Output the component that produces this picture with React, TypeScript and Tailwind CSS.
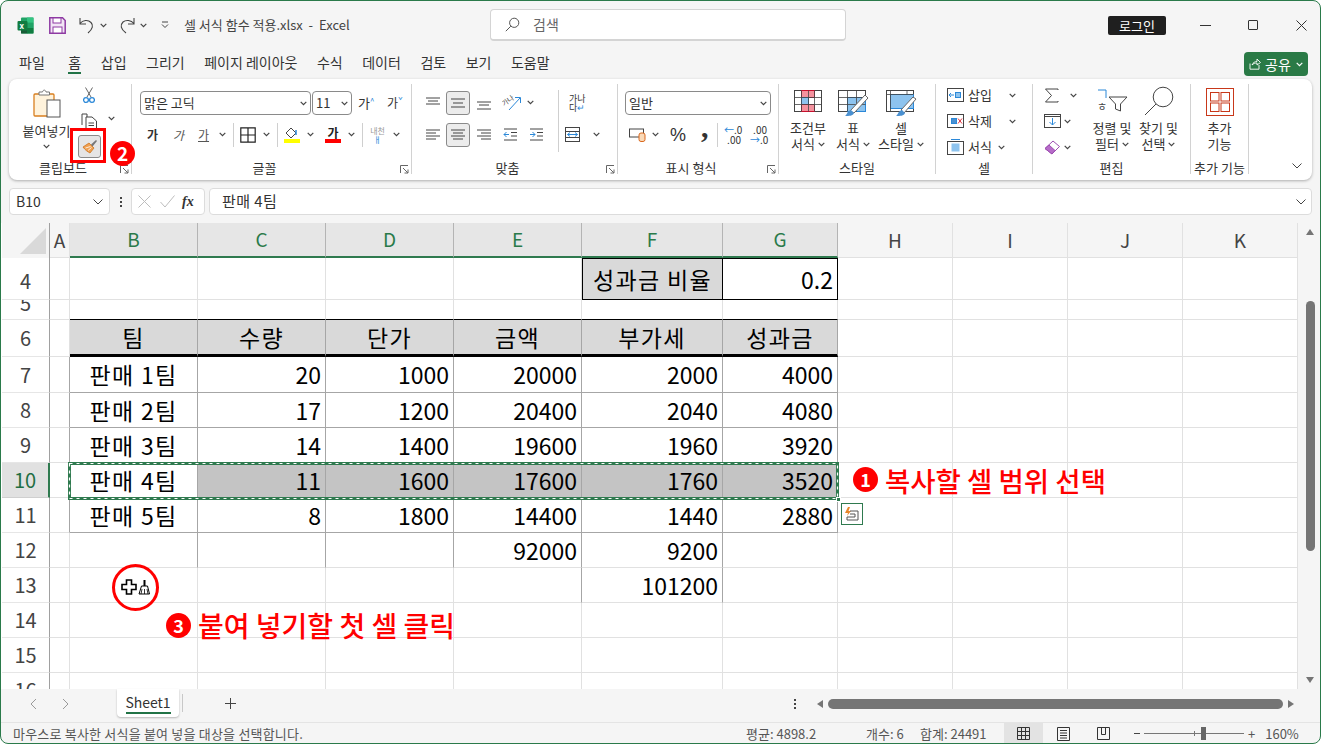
import type { ReactNode } from 'react'

const GRID = 'grid-cols-[48px_20px_128px_128px_128px_128px_141px_115px_115px_115px_115px_115px]'
const COLS = ['A', 'B', 'C', 'D', 'E', 'F', 'G', 'H', 'I', 'J', 'K']
const LIGHT = 'border-r border-b border-[#e1e1e1]'
const THIN = 'border-r border-b border-[#a6a6a6]'

const tableRows: Record<string, string[]> = {
  '7': ['판매 1팀', '20', '1000', '20000', '2000', '4000'],
  '8': ['판매 2팀', '17', '1200', '20400', '2040', '4080'],
  '9': ['판매 3팀', '14', '1400', '19600', '1960', '3920'],
  '10': ['판매 4팀', '11', '1600', '17600', '1760', '3520'],
  '11': ['판매 5팀', '8', '1800', '14400', '1440', '2880'],
  '12': ['', '', '', '92000', '9200', ''],
  '13': ['', '', '', '', '101200', ''],
}

const rows = [
  { n: '4', h: 'h-[42px]' },
  { n: '5', h: 'h-[20px]' },
  { n: '6', h: 'h-[37px]' },
  { n: '7', h: 'h-[36px]' },
  { n: '8', h: 'h-[35px]' },
  { n: '9', h: 'h-[35px]' },
  { n: '10', h: 'h-[35px]' },
  { n: '11', h: 'h-[35px]' },
  { n: '12', h: 'h-[35px]' },
  { n: '13', h: 'h-[35px]' },
  { n: '14', h: 'h-[35px]' },
  { n: '15', h: 'h-[35px]' },
  { n: '16', h: 'h-[35px]' },
]

function Chev({ className = '' }: { className?: string }) {
  return (
    <svg width="7" height="5" viewBox="0 0 7 5" className={`shrink-0 ${className}`}>
      <path d="M0.7 0.8 L3.5 3.6 L6.3 0.8" fill="none" stroke="#444" strokeWidth="1.2" />
    </svg>
  )
}

function Launcher() {
  return (
    <svg width="9" height="9" viewBox="0 0 9 9" className="shrink-0 ml-[3px] mr-[2px] mt-[3px]">
      <path d="M0.5 8 V0.5 H8 M3 3 L8 8 M8 4.5 V8 H4.5" fill="none" stroke="#666" strokeWidth="1" />
    </svg>
  )
}

function Group({ className, label, launcher, children }: { className: string; label: string; launcher?: boolean; children: ReactNode }) {
  return (
    <div className={`flex flex-col h-[90px] shrink-0 border-r border-[#d2d2d2] ${className}`}>
      <div className="h-[78px] flex">{children}</div>
      <div className="h-[12px] flex items-center text-[13px] leading-[12px] text-[#333]">
        <span className="flex-1 text-center whitespace-nowrap">{label}</span>
        {launcher && <Launcher />}
      </div>
    </div>
  )
}

function Lines({ ys, xs }: { ys: number[]; xs: [number, number][] }) {
  return (
    <svg width="16" height="16" viewBox="0 0 16 16">
      {ys.map((y, i) => (
        <path key={i} d={`M${xs[i][0]} ${y}H${xs[i][1]}`} stroke="#444" strokeWidth="1" />
      ))}
    </svg>
  )
}

function Sep({ className }: { className: string }) {
  return <div className={`w-px bg-[#cfcfcf] ${className}`} />
}

function Select({ className, text }: { className: string; text: string }) {
  return (
    <div className={`h-[24px] border border-[#8a8a8a] rounded-[4px] bg-white flex items-center justify-between pl-[3px] pr-[3px] text-[13px] text-[#333] ${className}`}>
      <span>{text}</span>
      <Chev />
    </div>
  )
}

function TableGridIcon({ children }: { children?: ReactNode }) {
  return (
    <svg width="32" height="28" viewBox="0 0 32 28" className="mt-[5px]">
      {children}
    </svg>
  )
}

function Cell({ row, col, text }: { row: string; col: number; text: string }) {
  let cls = LIGHT
  const inTable = col >= 1 && col <= 6
  const n = Number(row)
  if (row === '4' && col === 5) cls = 'border border-black bg-[#d9d9d9]'
  if (row === '4' && col === 6) cls = 'border-r border-y border-black'
  if (row === '5' && inTable) cls = 'border-r border-[#e1e1e1] border-b border-b-black'
  if (row === '6' && inTable) cls = 'bg-[#d9d9d9] border-r border-[#a6a6a6] border-b-[3px] border-b-black'
  if (n >= 7 && n <= 11 && inTable) cls = THIN
  if (n >= 7 && n <= 11 && col === 0) cls = 'border-r border-[#a6a6a6] border-b border-b-[#e1e1e1]'
  if (row === '10' && col >= 2 && col <= 6) cls = `${THIN} bg-[#c4c4c4]`
  if (row === '12' && col >= 1 && col <= 5) cls = 'border-r border-[#a6a6a6] border-b border-b-[#e1e1e1]'
  if (row === '13' && (col === 4 || col === 5)) cls = 'border-r border-[#a6a6a6] border-b border-b-[#e1e1e1]'
  const center = col === 1 || n === 6 || (row === '4' && col === 5)
  const hangul = /[가-힣]/.test(text)
  return (
    <div className={`flex items-center overflow-hidden whitespace-nowrap text-[23px] text-black box-border ${hangul ? 'tracking-[1.3px]' : ''} ${center ? 'justify-center' : 'justify-end pr-[4px]'} ${cls}`}>
      {text}
    </div>
  )
}

function Row({ n, h }: { n: string; h: string }) {
  const head6 = ['팀', '수량', '단가', '금액', '부가세', '성과금']
  const texts: string[] = Array(11).fill('')
  if (n === '4') {
    texts[5] = '성과금 비율'
    texts[6] = '0.2'
  }
  if (n === '6') head6.forEach((t, i) => (texts[i + 1] = t))
  if (tableRows[n]) tableRows[n].forEach((t, i) => (texts[i + 1] = t))
  const selected = n === '10'
  return (
    <div className={`grid ${GRID} ${h}`}>
      <div
        className={`flex justify-center overflow-hidden text-[20px] leading-[34px] border-b ${
          selected
            ? 'bg-[#e1e1e1] text-[#1f6e43] border-r-[2px] border-r-[#2f7a4f] border-b-[#cfcfcf]'
            : 'text-[#444] border-r border-r-[#a0a0a0] border-b-[#e6e6e6]'
        } ${n === '5' ? 'items-start' : 'items-center'}`}
      >
        <span className={n === '5' ? '-mt-[14px]' : n === '4' ? 'mt-[4px]' : ''}>{n}</span>
      </div>
      {COLS.map((_, i) => (
        <Cell key={i} row={n} col={i} text={texts[i]} />
      ))}
    </div>
  )
}

function Badge({ className, text }: { className: string; text: string }) {
  return (
    <div className={`absolute rounded-full bg-[#ff0000] text-white font-bold flex items-center justify-center ${className}`}>{text}</div>
  )
}

export default function App() {
  return (
    <div className="relative w-[1321px] h-[744px] overflow-hidden bg-white font-['Noto_Sans_CJK_KR','Noto_Sans',sans-serif]">
      <div className="w-full h-full border border-[#2a7a4a] rounded-[8px] overflow-hidden bg-[#f5f5f5] flex flex-col">
        {/* title bar */}
        <div className="h-[44px] flex items-center shrink-0 pt-[4px]">
          <div className="w-[489px] flex items-center shrink-0 pl-[16px]">
            <svg width="17" height="17" viewBox="0 0 17 17">
              <rect x="4" y="0.5" width="12.5" height="16" rx="1" fill="#21a366" />
              <rect x="10" y="0.5" width="6.5" height="5.3" fill="#33c481" />
              <rect x="4" y="11" width="6.3" height="5.5" fill="#185c37" />
              <rect x="10" y="11" width="6.5" height="5.5" fill="#107c41" />
              <rect x="10" y="5.8" width="6.5" height="5.2" fill="#21a366" />
              <rect x="0.5" y="4" width="10" height="9.5" rx="1" fill="#107c41" />
              <text x="2.6" y="11.6" fontSize="8" fontWeight="700" fill="#fff">x</text>
            </svg>
            <svg width="17" height="17" viewBox="0 0 17 17" className="ml-[15px]">
              <path d="M0.8 0.8H13.5L16.2 3.5V16.2H0.8Z" fill="#f2e6f5" stroke="#8e3ba3" strokeWidth="1.5" />
              <rect x="4" y="1" width="8" height="5" fill="#fff" stroke="#8e3ba3" />
              <rect x="4" y="10" width="9" height="6" fill="#fff" stroke="#8e3ba3" />
            </svg>
            <svg width="15" height="17" viewBox="0 0 15 17" className="ml-[13px]">
              <path d="M1 1V7H7 M1 6.5C4 3 9 2.5 12 5.5C14.5 8 14 12 9 16" fill="none" stroke="#444" strokeWidth="1.1" />
            </svg>
            <Chev className="ml-[6px]" />
            <svg width="16" height="17" viewBox="0 0 16 17" className="ml-[12px]">
              <path d="M15 1V7H9 M15 6.5C12 3 7 2.5 4 5C1 8 1.5 12 7 16" fill="none" stroke="#444" strokeWidth="1.1" />
            </svg>
            <Chev className="ml-[5px]" />
            <svg width="8" height="8" viewBox="0 0 8 8" className="ml-[14px]">
              <path d="M1 1H7 M1 3.5L4 6.5L7 3.5" fill="none" stroke="#444" strokeWidth="1" />
            </svg>
            <span className="ml-[15px] text-[13px] text-[#444] whitespace-pre">셀 서식 함수 적용.xlsx  -  Excel</span>
          </div>
          <div className="w-[356px] h-[32px] shrink-0 bg-white rounded-[4px] border border-[#d4d4d4] border-b-2 flex items-center pl-[14px] text-[14px] text-[#666]">
            <svg width="15" height="15" viewBox="0 0 15 15">
              <circle cx="9.2" cy="5.8" r="4.6" fill="none" stroke="#555" />
              <path d="M5.8 9.2L0.8 14.2" stroke="#555" />
            </svg>
            <span className="ml-[13px]">검색</span>
          </div>
          <div className="ml-[262px] w-[58px] h-[19px] rounded-[2px] bg-[#1f1f1f] text-white text-[13px] leading-[19px] flex items-center justify-center">로그인</div>
          <div className="ml-[34px] w-[11px] h-px bg-[#333]" />
          <div className="ml-[37px] w-[10px] h-[10px] border border-[#333] rounded-[1px]" />
          <svg width="11" height="11" viewBox="0 0 11 11" className="ml-[38px]">
            <path d="M0.5 0.5L10.5 10.5M10.5 0.5L0.5 10.5" stroke="#333" />
          </svg>
        </div>

        {/* menu row */}
        <div className="h-[34px] flex items-start pt-[7px] pl-[18px] pr-[12px] shrink-0 text-[14px] leading-[21px] text-[#333] gap-[19.5px]">
          <span className="mr-[4px]">파일</span>
          <span className="flex flex-col items-center">
            <span className="leading-[20px]">홈</span>
            <span className="w-[13px] h-[2px] bg-[#217346]" />
          </span>
          <span>삽입</span>
          <span>그리기</span>
          <span>페이지 레이아웃</span>
          <span>수식</span>
          <span>데이터</span>
          <span>검토</span>
          <span>보기</span>
          <span>도움말</span>
          <div className="ml-auto w-[64px] h-[24px] rounded-[4px] bg-[#2a7a46] text-white flex items-center pl-[5px] gap-[4px]">
            <svg width="12" height="12" viewBox="0 0 12 12">
              <path d="M1 5.5V11.2H10V7 M3 7C4 4.5 6 3.5 8 3.5V1L11.5 4.5L8 7V5C6 5 4.5 5.5 3 7Z" fill="none" stroke="#fff" strokeWidth="0.9" />
            </svg>
            <span>공유</span>
            <svg width="7" height="5" viewBox="0 0 7 5" className="ml-[1px]">
              <path d="M0.7 0.8L3.5 3.6L6.3 0.8" fill="none" stroke="#fff" strokeWidth="1.2" />
            </svg>
          </div>
        </div>

        {/* ribbon */}
        <div className="ml-[8px] w-[1303px] h-[101px] shrink-0 bg-white rounded-[8px] shadow-[0_1px_3px_rgba(0,0,0,0.3)] flex pt-[5px] relative">
          <Group className="w-[123px]" label="클립보드" launcher>
            <div className="w-[47px] ml-[14px] flex flex-col items-center">
              <svg width="28" height="29" viewBox="0 0 28 29" className="mt-[5px] ml-[1px]">
                <rect x="1" y="5" width="20" height="22" rx="1" fill="#fff3dc" stroke="#d97f1f" strokeWidth="1.3" />
                <path d="M6 6V3H9.5C10 0.5 12.5 0.5 13 3H16.5V6Z" fill="#fff" stroke="#777" />
                <rect x="14" y="11" width="13" height="17" fill="#fff" stroke="#555" />
              </svg>
              <span className="text-[13px] leading-[14px] mt-[6px] whitespace-nowrap text-[#333]">붙여넣기</span>
              <Chev className="mt-[6px]" />
            </div>
            <div className="ml-[8px] flex flex-col items-start">
              <svg width="12" height="17" viewBox="0 0 12 17" className="mt-[3px] ml-[5px]">
                <path d="M2.5 0.5L8 10M9.5 0.5L4 10" stroke="#666" fill="none" />
                <circle cx="3" cy="13" r="2.4" fill="none" stroke="#2b88d8" strokeWidth="1.3" />
                <circle cx="9" cy="13" r="2.4" fill="none" stroke="#2b88d8" strokeWidth="1.3" />
              </svg>
              <div className="flex items-center mt-[9px] ml-[3px]">
                <svg width="17" height="16" viewBox="0 0 17 16">
                  <path d="M1 12V1H6V4 M5 4H11L15.5 8V15.5H5Z" fill="#fff" stroke="#444" />
                  <path d="M7.5 10H13M7.5 12.5H13" stroke="#444" />
                </svg>
                <Chev className="ml-[10px] -mt-[6px]" />
              </div>
              <div className="w-[23px] h-[23px] mt-[6px] rounded-[3px] border border-[#8a8a8a] bg-[#e5e5e5] flex items-center justify-center">
                <svg width="16" height="15" viewBox="0 0 16 15">
                  <path d="M1 8L7 4L12 9L8 14C6 13 3 11 1 8Z" fill="#f0a050" stroke="#c86a10" strokeWidth="0.7" />
                  <path d="M3.5 9L8.5 7.5M6 11.5L9.5 8.5" stroke="#fff" strokeWidth="0.8" />
                  <path d="M9 5.5L14 1L15 2L10.5 7.5Z" fill="#777" />
                </svg>
              </div>
            </div>
          </Group>

          <Group className="w-[280px]" label="글꼴" launcher>
            <div className="flex flex-col pl-[8px]">
              <div className="flex items-center mt-[7px] gap-[1px]">
                <Select className="w-[171px]" text="맑은 고딕" />
                <Select className="w-[40px]" text="11" />
                <span className="ml-[5px] text-[13px] text-[#333] w-[19px] whitespace-nowrap">가<sup className="text-[#2b88d8] text-[8px]">^</sup></span>
                <span className="ml-[9px] text-[12px] text-[#333] w-[19px] whitespace-nowrap">가<sup className="text-[#2b88d8] text-[8px]">ˇ</sup></span>
              </div>
              <div className="flex items-center mt-[7px] h-[25px] text-[12px] text-[#333]">
                <span className="ml-[7px] w-[12px] font-bold">가</span>
                <span className="ml-[14px] w-[12px] italic text-[#555]">가</span>
                <span className="ml-[13px] w-[12px] underline text-[#555]">가</span>
                <Chev className="ml-[9px]" />
                <Sep className="h-[24px] ml-[7px]" />
                <svg width="16" height="16" viewBox="0 0 16 16" className="ml-[6px]">
                  <path d="M0.8 0.8H15.2V15.2H0.8ZM8 0.8V15.2M0.8 8H15.2" fill="none" stroke="#222" strokeWidth="1.2" />
                </svg>
                <Chev className="ml-[7px]" />
                <Sep className="h-[24px] ml-[7px]" />
                <div className="ml-[6px] w-[16px] flex flex-col items-center">
                  <svg width="15" height="12" viewBox="0 0 15 12">
                    <path d="M6 1L11 6L6 11L1 6Z" fill="#fff" stroke="#444" />
                    <path d="M11 8V3" stroke="#2b88d8" strokeWidth="1.5" />
                  </svg>
                  <div className="w-[16px] h-[4px] bg-[#ffff00]" />
                </div>
                <Chev className="ml-[7px]" />
                <div className="ml-[11px] w-[16px] flex flex-col items-center">
                  <span className="font-bold text-[12px] leading-[12px] text-[#222]">가</span>
                  <div className="w-[16px] h-[4px] bg-[#ff0000]" />
                </div>
                <Chev className="ml-[7px]" />
                <Sep className="h-[24px] ml-[7px]" />
                <div className="ml-[6px] w-[17px] flex flex-col items-center text-[8px] leading-[9px] text-[#999]">
                  <span>내천</span>
                  <span className="text-[#2b88d8]">ㅐ</span>
                </div>
                <Chev className="ml-[7px]" />
              </div>
            </div>
          </Group>

          <Group className="w-[206px]" label="맞춤" launcher>
            <div className="flex flex-col pl-[13px]">
              <div className="flex items-center mt-[6px] h-[25px]">
                <Lines ys={[3, 6, 9]} xs={[[1, 15], [3, 13], [1, 15]]} />
                <div className="ml-[5px] w-[24px] h-[24px] rounded-[3px] border border-[#8a8a8a] bg-[#ececec] flex items-center justify-center">
                  <Lines ys={[4, 8, 12]} xs={[[1, 15], [3, 13], [1, 15]]} />
                </div>
                <div className="ml-[6px]"><Lines ys={[7, 10, 14]} xs={[[1, 15], [3, 13], [1, 15]]} /></div>
                <svg width="19" height="16" viewBox="0 0 19 16" className="ml-[10px]">
                  <path d="M7 15L18 3M13 2.5H18.5V8" fill="none" stroke="#2b88d8" />
                  <text x="0" y="9" fontSize="7" fill="#444" transform="rotate(-35 5 7)">가나</text>
                </svg>
                <Chev className="ml-[6px]" />
                <Sep className="h-[62px] ml-[24px] self-start" />
                <div className="ml-[10px] w-[18px] flex flex-col text-[9px] leading-[9px] text-[#333]">
                  <span>가나</span>
                  <span>다<span className="text-[#2b88d8]">↵</span></span>
                </div>
              </div>
              <div className="flex items-center mt-[7px] h-[25px]">
                <Lines ys={[3, 6, 9, 12]} xs={[[1, 15], [1, 11], [1, 15], [1, 11]]} />
                <div className="ml-[5px] w-[24px] h-[24px] rounded-[3px] border border-[#8a8a8a] bg-[#ececec] flex items-center justify-center">
                  <Lines ys={[3, 6, 9, 12]} xs={[[1, 15], [3, 13], [1, 15], [3, 13]]} />
                </div>
                <div className="ml-[6px]"><Lines ys={[3, 6, 9, 12]} xs={[[1, 15], [5, 15], [1, 15], [5, 15]]} /></div>
                <svg width="15" height="13" viewBox="0 0 15 13" className="ml-[11px]">
                  <path d="M1 1H14M8 4.5H14M8 8H14M1 12H14" stroke="#444" />
                  <path d="M6 6.5H1M3.5 4L1 6.5L3.5 9" fill="none" stroke="#2b88d8" />
                </svg>
                <svg width="15" height="13" viewBox="0 0 15 13" className="ml-[11px]">
                  <path d="M1 1H14M8 4.5H14M8 8H14M1 12H14" stroke="#444" />
                  <path d="M1 6.5H6M3.5 4L6 6.5L3.5 9" fill="none" stroke="#2b88d8" />
                </svg>
                <svg width="15" height="15" viewBox="0 0 15 15" className="ml-[21px]">
                  <rect x="0.5" y="0.5" width="14" height="14" fill="#fff" stroke="#444" />
                  <path d="M0.5 4.5H14.5M0.5 10.5H14.5" stroke="#444" />
                  <path d="M2.5 7.5H12.5M5 5.5L2.5 7.5L5 9.5M10 5.5L12.5 7.5L10 9.5" fill="none" stroke="#2b88d8" />
                </svg>
                <Chev className="ml-[13px]" />
              </div>
            </div>
          </Group>

          <Group className="w-[161px]" label="표시 형식" launcher>
            <div className="flex flex-col pl-[7px]">
              <Select className="w-[146px] mt-[7px]" text="일반" />
              <div className="flex items-center mt-[7px] h-[25px] text-[#333]">
                <svg width="17" height="14" viewBox="0 0 17 14" className="ml-[4px]">
                  <rect x="0.5" y="1" width="14" height="8" fill="#fff" stroke="#444" />
                  <rect x="10" y="5" width="6" height="8.5" rx="2" fill="#f9d9b8" stroke="#d9691e" />
                </svg>
                <Chev className="ml-[6px]" />
                <span className="ml-[11px] w-[16px] text-[18px] leading-[18px] font-['Liberation_Sans',sans-serif]">%</span>
                <span className="ml-[15px] w-[9px] text-[30px] leading-[16px] font-bold font-['Liberation_Serif',serif] -mt-[16px]">,</span>
                <Sep className="h-[24px] ml-[7px]" />
                <div className="ml-[6px] w-[17px] text-[10px] leading-[10px] text-right"><span className="text-[#2b88d8]">←</span>.0<br />.00</div>
                <div className="ml-[9px] w-[17px] text-[10px] leading-[10px] text-right">.00<br /><span className="text-[#2b88d8]">→</span>.0</div>
              </div>
            </div>
          </Group>

          <Group className="w-[157px]" label="스타일">
            <div className="flex text-[13px] leading-[16px] text-[#333] text-center">
              <div className="w-[46px] ml-[6px] flex flex-col items-center whitespace-nowrap">
                <TableGridIcon>
                  <rect x="2.5" y="1.5" width="27" height="21" fill="#fff" stroke="#444" />
                  <rect x="9.5" y="1.5" width="13" height="7" fill="#f4929e" stroke="#c8102e" />
                  <rect x="9.5" y="8.5" width="7" height="7" fill="#8dc3ee" stroke="#2b88d8" />
                  <rect x="9.5" y="15.5" width="13" height="7" fill="#f4929e" stroke="#c8102e" />
                  <path d="M2.5 8.5H29.5M2.5 15.5H29.5M9.5 1.5V22.5M16.5 1.5V22.5M22.5 1.5V22.5" stroke="#444" strokeWidth="0.8" fill="none" />
                </TableGridIcon>
                <span className="mt-[3px]">조건부</span>
                <span className="flex items-center gap-[3px]">서식<Chev /></span>
              </div>
              <div className="w-[44px] flex flex-col items-center whitespace-nowrap">
                <TableGridIcon>
                  <rect x="1.5" y="1.5" width="27" height="21" fill="#fff" stroke="#444" />
                  <rect x="10.5" y="8.5" width="18" height="14" fill="#8dc3ee" stroke="#2b88d8" />
                  <path d="M1.5 8.5H28.5M1.5 15.5H28.5M10.5 1.5V22.5M19.5 1.5V22.5" stroke="#444" strokeWidth="0.8" />
                  <path d="M13 22L28 6L31 9L17 24Z" fill="#fff" stroke="#666" />
                  <path d="M8 27C10 26 10 22 14 21L17 24C16 27 12 27 8 27Z" fill="#4a90d0" />
                </TableGridIcon>
                <span className="mt-[3px]">표</span>
                <span className="flex items-center gap-[3px]">서식<Chev /></span>
              </div>
              <div className="w-[52px] flex flex-col items-center whitespace-nowrap">
                <TableGridIcon>
                  <rect x="1.5" y="1.5" width="27" height="21" fill="#fff" stroke="#444" />
                  <rect x="5.5" y="5.5" width="23" height="14" fill="#8dc3ee" stroke="#2b88d8" />
                  <path d="M1.5 5.5H28.5M5.5 1.5V22.5M22 1.5V5.5" stroke="#444" strokeWidth="0.8" />
                  <path d="M16 21L28 8L31 10L19 24Z" fill="#fff" stroke="#666" />
                  <path d="M11 27C13 26 13 22 17 21L20 24C19 27 15 27 11 27Z" fill="#4a90d0" />
                </TableGridIcon>
                <span className="mt-[3px]">셀</span>
                <span className="flex items-center gap-[3px] whitespace-nowrap">스타일<Chev /></span>
              </div>
            </div>
          </Group>

          <Group className="w-[97px]" label="셀">
            <div className="flex flex-col pl-[11px] text-[13px] text-[#333]">
              <div className="flex items-center h-[18px] mt-[2px]">
                <svg width="17" height="14" viewBox="0 0 17 14">
                  <rect x="0.5" y="0.5" width="16" height="13" fill="#fff" stroke="#444" />
                  <rect x="8.5" y="4.5" width="5" height="5" fill="#8dc3ee" stroke="#2b88d8" />
                  <path d="M7 7H2M4 5L2 7L4 9" fill="none" stroke="#2b88d8" />
                </svg>
                <span className="ml-[4px]">삽입</span>
                <Chev className="ml-[17px]" />
              </div>
              <div className="flex items-center h-[18px] mt-[8px]">
                <svg width="17" height="14" viewBox="0 0 17 14">
                  <rect x="0.5" y="0.5" width="16" height="13" fill="#fff" stroke="#444" />
                  <rect x="4.5" y="4.5" width="5" height="5" fill="#4a90d0" stroke="#2b88d8" />
                  <path d="M11 4.5L15 9.5M15 4.5L11 9.5" stroke="#e0303a" />
                </svg>
                <span className="ml-[4px]">삭제</span>
                <Chev className="ml-[17px]" />
              </div>
              <div className="flex items-center h-[18px] mt-[8px]">
                <svg width="17" height="16" viewBox="0 0 17 16">
                  <rect x="0.5" y="2.5" width="16" height="13" fill="#fff" stroke="#444" />
                  <rect x="4.5" y="4.5" width="8" height="8" fill="#8dc3ee" />
                  <path d="M4 0.5H13" stroke="#2b88d8" />
                </svg>
                <span className="ml-[4px]">서식</span>
                <Chev className="ml-[6px]" />
              </div>
            </div>
          </Group>

          <Group className="w-[158px]" label="편집">
            <div className="flex">
              <div className="flex flex-col pl-[11px] w-[57px]">
                <div className="flex items-center h-[18px] mt-[2px]">
                  <svg width="15" height="15" viewBox="0 0 15 15"><path d="M14 2V1H1.5L7.5 7.5L1.5 14H14V13" fill="none" stroke="#444" /></svg>
                  <Chev className="ml-[11px]" />
                </div>
                <div className="flex items-center h-[18px] mt-[8px]">
                  <svg width="17" height="15" viewBox="0 0 17 15">
                    <rect x="0.5" y="0.5" width="16" height="13" fill="#fff" stroke="#444" />
                    <path d="M0.5 2.5H16.5" stroke="#444" />
                    <path d="M8.5 4V11M5.5 8L8.5 11L11.5 8" fill="none" stroke="#2b88d8" />
                  </svg>
                  <Chev className="ml-[3px]" />
                </div>
                <div className="flex items-center h-[18px] mt-[8px]">
                  <svg width="17" height="15" viewBox="0 0 17 15">
                    <path d="M1 8.5L9 1L15.5 6.5L8 14Z" fill="#fff" stroke="#9c4db0" />
                    <path d="M1 8.5L5 5L11 10.5L8 14Z" fill="#b76cc9" stroke="#9c4db0" />
                  </svg>
                  <Chev className="ml-[3px]" />
                </div>
              </div>
              <div className="w-[44px] flex flex-col items-center text-[13px] leading-[16px] text-[#333] whitespace-nowrap">
                <svg width="32" height="24" viewBox="0 0 32 24" className="mt-[5px]">
                  <path d="M2 1H10V9" fill="none" stroke="#2b88d8" />
                  <text x="1" y="22" fontSize="11" fill="#444">ㅎ</text>
                  <path d="M13 8H31L24.5 15V22L19.5 20V15Z" fill="#fff" stroke="#444" />
                </svg>
                <span className="mt-[7px]">정렬 및</span>
                <span className="flex items-center gap-[3px]">필터<Chev /></span>
              </div>
              <div className="w-[49px] flex flex-col items-center text-[13px] leading-[16px] text-[#333] whitespace-nowrap">
                <svg width="30" height="30" viewBox="0 0 30 30" className="mt-[2px] mb-[4px]">
                  <circle cx="19" cy="11" r="9.8" fill="#fff" stroke="#444" />
                  <path d="M12 18L1 29" stroke="#444" />
                </svg>
                <span>찾기 및</span>
                <span className="flex items-center gap-[3px]">선택<Chev /></span>
              </div>
            </div>
          </Group>

          <Group className="w-[58px]" label="추가 기능">
            <div className="flex-1 flex flex-col items-center text-[13px] leading-[16px] text-[#333]">
              <svg width="28" height="28" viewBox="0 0 28 28" className="mt-[4px]">
                <rect x="0.5" y="0.5" width="27" height="27" fill="#fff" stroke="#c8381a" />
                <rect x="4.5" y="4.5" width="8.5" height="8.5" fill="none" stroke="#c8381a" />
                <rect x="15" y="4.5" width="8.5" height="8.5" fill="none" stroke="#c8381a" />
                <rect x="4.5" y="15" width="8.5" height="8.5" fill="none" stroke="#c8381a" />
                <rect x="15" y="15" width="8.5" height="8.5" fill="none" stroke="#c8381a" />
              </svg>
              <span className="mt-[4px]">추가</span>
              <span>기능</span>
            </div>
          </Group>

          <div className="flex-1 flex items-end justify-end pr-[10px] pb-[11px]">
            <svg width="10" height="6" viewBox="0 0 10 6"><path d="M0.5 0.5L5 5L9.5 0.5" fill="none" stroke="#444" /></svg>
          </div>
        </div>

        {/* formula bar */}
        <div className="h-[43px] shrink-0 pt-[8px] pl-[8px] flex items-start text-[#333]">
          <div className="w-[101px] h-[27px] bg-white rounded-[4px] border border-[#dcdcdc] flex items-center justify-between pl-[6px] pr-[6px] text-[14px]">
            <span>B10</span>
            <svg width="10" height="6" viewBox="0 0 10 6"><path d="M0.5 0.5L5 5L9.5 0.5" fill="none" stroke="#444" /></svg>
          </div>
          <div className="w-[21px] h-[27px] flex flex-col items-center justify-center gap-[2px]">
            <div className="w-[2px] h-[2px] bg-[#444]" />
            <div className="w-[2px] h-[2px] bg-[#444]" />
            <div className="w-[2px] h-[2px] bg-[#444]" />
          </div>
          <div className="w-[74px] h-[27px] bg-white rounded-[4px] border border-[#dcdcdc] flex items-center pl-[6px] gap-[9px]">
            <svg width="13" height="13" viewBox="0 0 13 13"><path d="M0.5 0.5L12.5 12.5M12.5 0.5L0.5 12.5" stroke="#bdbdbd" /></svg>
            <svg width="15" height="13" viewBox="0 0 15 13"><path d="M0.5 7L5 12L14.5 0.5" fill="none" stroke="#bdbdbd" /></svg>
            <span className="font-['Liberation_Serif',serif] italic font-bold text-[14px] -ml-[2px]">fx</span>
          </div>
          <div className="ml-[4px] w-[1103px] h-[27px] bg-white rounded-[4px] border border-[#dcdcdc] flex items-center justify-between pl-[12px] pr-[5px] text-[15px] tracking-[0.4px]">
            <span>판매 4팀</span>
            <svg width="10" height="6" viewBox="0 0 10 6"><path d="M0.5 0.5L5 5L9.5 0.5" fill="none" stroke="#444" /></svg>
          </div>
        </div>

        {/* sheet */}
        <div className="h-[466px] shrink-0 flex overflow-hidden bg-white pl-[1px]">
          <div className="w-[1296px] shrink-0 overflow-hidden">
            <div className={`grid ${GRID} h-[35px] bg-[#f5f5f5] text-[19px] text-[#444]`}>
              <div className="flex items-end justify-end pr-[3px] pb-[4px] border-r border-[#a0a0a0]">
                <div className="w-0 h-0 border-l-[26px] border-l-transparent border-b-[26px] border-b-[#d9d9d9]" />
              </div>
              {COLS.map((c, i) => {
                const sel = i >= 1 && i <= 6
                return (
                  <div
                    key={c}
                    className={`flex items-center justify-center border-r ${
                      sel
                        ? 'bg-[#e6e6e6] text-[#2a7a4a] border-[#b4b4b4] border-b-[2px] border-b-[#2f7a4f]'
                        : 'border-[#e1e1e1] border-b border-b-[#e1e1e1]'
                    }`}
                  >
                    {c}
                  </div>
                )
              })}
            </div>
            {rows.map((r) => (
              <Row key={r.n} n={r.n} h={r.h} />
            ))}
          </div>
          <div className="flex-1 flex flex-col items-center justify-between py-[6px] pl-[2px] bg-[#f5f5f5]">
            <div className="flex flex-col items-center w-full">
              <div className="w-0 h-0 border-x-[4px] border-x-transparent border-b-[6px] border-b-[#757575]" />
              <div className="mt-[66px] w-[9px] h-[250px] rounded-full bg-[#757575]" />
            </div>
            <div className="w-0 h-0 border-x-[4px] border-x-transparent border-t-[6px] border-t-[#757575]" />
          </div>
        </div>

        {/* tab bar */}
        <div className="h-[33px] shrink-0 flex items-start bg-[#f5f5f5] relative">
          <svg width="8" height="12" viewBox="0 0 8 12" className="ml-[28px] mt-[9px]"><path d="M7 1L2 6L7 11" fill="none" stroke="#999" /></svg>
          <svg width="8" height="12" viewBox="0 0 8 12" className="ml-[25px] mt-[9px]"><path d="M1 1L6 6L1 11" fill="none" stroke="#999" /></svg>
          <div className="ml-[47px] w-[62px] h-[28px] pt-[3px] bg-white rounded-b-[4px] shadow-[0_1px_2px_rgba(0,0,0,0.25)] flex flex-col items-center text-[14px] text-[#333]">
            <span className="leading-[20px]">Sheet1</span>
            <span className="w-[45px] h-[2px] bg-[#217346]" />
          </div>
          <div className="ml-[3px] mt-[5px] w-px h-[18px] bg-[#c8c8c8]" />
          <svg width="11" height="11" viewBox="0 0 11 11" className="ml-[42px] mt-[9px]"><path d="M5.5 0V11M0 5.5H11" stroke="#444" /></svg>
          <div className="ml-[558px] mt-[10px] flex flex-col gap-[2px]">
            <div className="w-[2px] h-[2px] bg-[#444]" />
            <div className="w-[2px] h-[2px] bg-[#444]" />
            <div className="w-[2px] h-[2px] bg-[#444]" />
          </div>
          <div className="ml-[21px] mt-[11px] w-0 h-0 border-y-[4px] border-y-transparent border-r-[6px] border-r-[#757575]" />
          <div className="ml-[5px] mt-[10px] w-[455px] h-[10px] rounded-full bg-[#757575]" />
          <div className="ml-[5px] mt-[11px] w-0 h-0 border-y-[4px] border-y-transparent border-l-[6px] border-l-[#757575]" />
        </div>

        {/* status bar */}
        <div className="flex-1 flex items-center text-[13px] leading-[16px] text-[#555] border-t border-[#e4e4e4] pl-[12px] whitespace-nowrap">
          <span className="w-[733px] shrink-0 tracking-[0.2px]">마우스로 복사한 서식을 붙여 넣을 대상을 선택합니다.</span>
          <span className="w-[120px] shrink-0">평균: 4898.2</span>
          <span className="w-[54px] shrink-0">개수: 6</span>
          <span className="w-[84px] shrink-0">합계: 24491</span>
          <div className="w-[39px] h-[21px] bg-[#e3e3e3] flex items-center justify-center">
            <svg width="13" height="13" viewBox="0 0 13 13"><path d="M0.5 0.5H12.5V12.5H0.5ZM4.5 0.5V12.5M8.5 0.5V12.5M0.5 4.5H12.5M0.5 8.5H12.5" fill="none" stroke="#333" /></svg>
          </div>
          <svg width="13" height="14" viewBox="0 0 13 14" className="ml-[14px]"><path d="M0.5 0.5H12.5V13.5H0.5ZM3 3.5H10M3 6H10M3 8.5H10M3 11H10" fill="none" stroke="#333" /></svg>
          <svg width="13" height="13" viewBox="0 0 13 13" className="ml-[27px]"><path d="M0.5 0.5H12.5V12.5H0.5ZM4.5 0.5V7.5H8.5V0.5" fill="none" stroke="#333" /></svg>
          <div className="ml-[24px] w-[6px] h-px bg-[#444]" />
          <div className="ml-[4px] w-[100px] h-px bg-[#777] relative">
            <div className="absolute left-[50px] -top-[2px] w-px h-[5px] bg-[#777]" />
            <div className="absolute left-[57px] -top-[6px] w-[5px] h-[13px] bg-[#666]" />
          </div>
          <span className="ml-[4px] text-[13px] leading-[13px]">+</span>
          <span className="ml-[10px]">160%</span>
        </div>
      </div>

      {/* annotations and selection overlays */}
      <div className="absolute left-[70px] top-[128px] w-[36px] h-[35px] border-[3px] border-[#ff0000]" />
      <Badge className="left-[110px] top-[141px] w-[25px] h-[25px] text-[19px]" text="2" />

      <svg width="771" height="38" viewBox="0 0 771 38" className="absolute left-[68px] top-[462px]">
        <rect x="1.5" y="1.5" width="768" height="35" fill="none" stroke="#2f7a4f" strokeWidth="3" />
        <rect x="1.5" y="1.5" width="768" height="35" fill="none" stroke="#fff" strokeWidth="1.2" strokeDasharray="3 4" />
      </svg>
      <div className="absolute left-[836px] top-[497px] w-[5px] h-[5px] bg-[#2f7a4f] border border-white" />

      <Badge className="left-[853px] top-[467px] w-[25px] h-[25px] text-[18px]" text="1" />
      <span className="absolute left-[885px] top-[463px] text-[27.5px] leading-[34px] font-medium text-[#ff0000] whitespace-nowrap">복사할 셀 범위 선택</span>

      <div className="absolute left-[841px] top-[503px] w-[22px] h-[22px] bg-white border border-[#2f7a4f] flex items-center justify-center">
        <svg width="16" height="16" viewBox="0 0 16 16">
          <path d="M4 1L1 7H4L3 10L7 5H4.5L6 1Z" fill="#e8872a" />
          <path d="M6 5H14V14H3V11H11V8H6" fill="none" stroke="#555" />
        </svg>
      </div>

      <div className="absolute left-[112px] top-[564px] w-[47px] h-[47px] rounded-full border-[3px] border-[#ff0000] flex items-center justify-center">
        <svg width="30" height="17" viewBox="0 0 30 17">
          <path d="M5.5 1H10.5V5.5H15V10.5H10.5V15H5.5V10.5H1V5.5H5.5Z" fill="#fff" stroke="#000" strokeWidth="1.6" />
          <path d="M22.5 1H24.5V7H22.5Z" fill="#000" />
          <path d="M20.5 7H26.5L28.5 15H18Z" fill="#fff" stroke="#000" strokeWidth="1" />
          <path d="M21 10L20 15M23.5 10V15M26 10L27 15" stroke="#000" strokeWidth="0.8" />
        </svg>
      </div>

      <Badge className="left-[166px] top-[613px] w-[25px] h-[25px] text-[18px]" text="3" />
      <span className="absolute left-[198px] top-[608px] text-[28px] leading-[34px] font-medium text-[#ff0000] whitespace-nowrap">붙여 넣기할 첫 셀 클릭</span>
    </div>
  )
}
